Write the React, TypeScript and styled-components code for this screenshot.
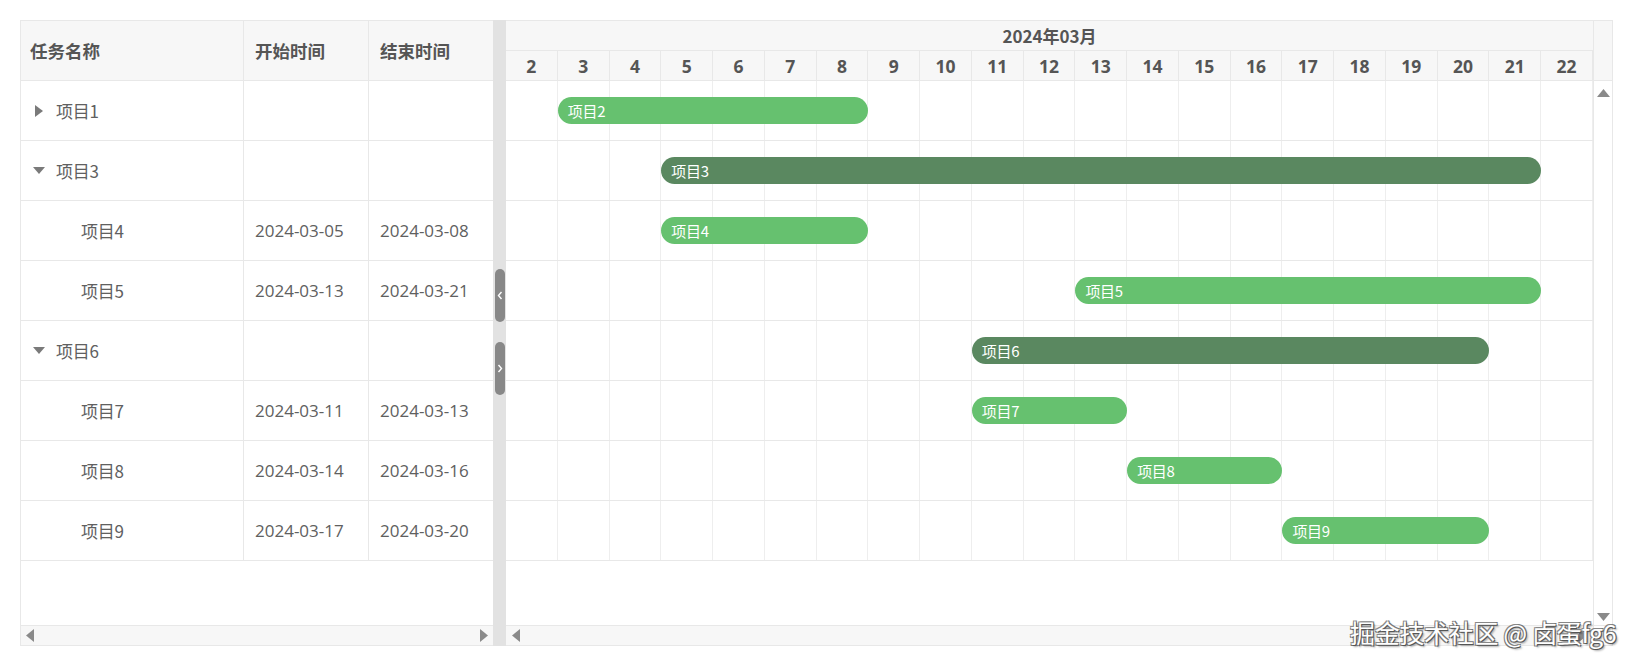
import React from "react";
import styled, { createGlobalStyle } from "styled-components";

const GlobalStyle = createGlobalStyle`
  html, body { margin: 0; padding: 0; background: #ffffff; }
  body {
    font-family: "Open Sans", "Noto Sans CJK SC", sans-serif;
    color: #606266;
  }
  * { box-sizing: border-box; }
`;

const LINE = "#e8e8e8";
const GRID_LINE = "#eeeeee";

type Toggle = "none" | "collapsed" | "expanded";

interface Task {
  name: string;
  depth: number;
  toggle: Toggle;
  start: string;
  end: string;
  bar: { label: string; from: number; to: number; parent: boolean };
}

const TASKS: Task[] = [
  { name: "项目1", depth: 0, toggle: "collapsed", start: "", end: "", bar: { label: "项目2", from: 3, to: 8, parent: false } },
  { name: "项目3", depth: 0, toggle: "expanded", start: "", end: "", bar: { label: "项目3", from: 5, to: 21, parent: true } },
  { name: "项目4", depth: 1, toggle: "none", start: "2024-03-05", end: "2024-03-08", bar: { label: "项目4", from: 5, to: 8, parent: false } },
  { name: "项目5", depth: 1, toggle: "none", start: "2024-03-13", end: "2024-03-21", bar: { label: "项目5", from: 13, to: 21, parent: false } },
  { name: "项目6", depth: 0, toggle: "expanded", start: "", end: "", bar: { label: "项目6", from: 11, to: 20, parent: true } },
  { name: "项目7", depth: 1, toggle: "none", start: "2024-03-11", end: "2024-03-13", bar: { label: "项目7", from: 11, to: 13, parent: false } },
  { name: "项目8", depth: 1, toggle: "none", start: "2024-03-14", end: "2024-03-16", bar: { label: "项目8", from: 14, to: 16, parent: false } },
  { name: "项目9", depth: 1, toggle: "none", start: "2024-03-17", end: "2024-03-20", bar: { label: "项目9", from: 17, to: 20, parent: false } },
];

const FIRST_DAY = 2;
const DAYS = Array.from({ length: 21 }, (_, i) => FIRST_DAY + i);

/* ---------- page frame ---------- */

const Page = styled.div`
  position: relative;
  padding: 20px 0 0 20px;
  width: 1641px;
  height: 672px;
`;

const Frame = styled.div`
  display: flex;
  width: 1593px;
  height: 626px;
`;

/* ---------- left table ---------- */

const TablePanel = styled.section`
  width: 473px;
  display: flex;
  flex-direction: column;
  border: 1px solid ${LINE};
  border-right: none;
`;

const TableRow = styled.div<{ $head?: boolean }>`
  display: grid;
  grid-template-columns: 223px 125px 124px;
  height: 60px;
  flex: none;
  border-bottom: 1px solid ${LINE};
  background: ${(p) => (p.$head ? "#f7f7f7" : "#ffffff")};
`;

const Cell = styled.div<{ $head?: boolean; $first?: boolean; $last?: boolean }>`
  display: flex;
  align-items: center;
  padding-left: ${(p) => (p.$first ? "9px" : "11px")};
  border-right: ${(p) => (p.$last ? "none" : `1px solid ${LINE}`)};
  font-size: ${(p) => (p.$head ? "17.5px" : "17px")};
  font-weight: ${(p) => (p.$head ? 700 : 400)};
  color: ${(p) => (p.$head ? "#555555" : "#606060")};
  font-family: ${(p) =>
    p.$head ? `"Noto Sans CJK SC", sans-serif` : `"Open Sans", "Noto Sans CJK SC", sans-serif`};
  white-space: nowrap;
  overflow: hidden;
`;

const Indent = styled.span<{ $depth: number }>`
  display: inline-block;
  width: ${(p) => p.$depth * 25}px;
  flex: none;
`;

const ToggleSlot = styled.span`
  display: inline-flex;
  align-items: center;
  justify-content: center;
  width: 12px;
  margin: 0 11px 0 3px;
  flex: none;
  height: 14px;
`;

const NameText = styled.span`
  font-family: "Noto Sans CJK SC", sans-serif;
  font-size: 17px;
  line-height: 1;
  letter-spacing: -0.3px;
`;

const TableFiller = styled.div`
  flex: 1;
`;

const HScroll = styled.div<{ $inset: number }>`
  height: 20px;
  flex: none;
  display: flex;
  align-items: center;
  justify-content: space-between;
  padding: 0 ${(p) => p.$inset}px;
  background: #f7f7f7;
  border-top: 1px solid ${LINE};
`;

/* ---------- splitter ---------- */

const Splitter = styled.div`
  width: 13px;
  flex: none;
  background: #e2e2e2;
  display: flex;
  flex-direction: column;
  align-items: flex-start;
  padding: 249px 0 0 2px;
  gap: 20px;
`;

const SplitHandle = styled.div`
  width: 10px;
  height: 53px;
  border-radius: 5px;
  background: #888888;
  display: flex;
  align-items: center;
  justify-content: center;
`;

/* ---------- gantt ---------- */

const GanttPanel = styled.section`
  width: 1107px;
  display: grid;
  grid-template-columns: 1087px 19px;
  grid-template-rows: 60px 1fr 20px;
  border: 1px solid ${LINE};
  border-left: none;
`;

const GanttHead = styled.div`
  display: flex;
  flex-direction: column;
  background: #f7f7f7;
  border-bottom: 1px solid ${LINE};
`;

const MonthRow = styled.div`
  height: 30px;
  flex: none;
  display: flex;
  align-items: center;
  justify-content: center;
  border-bottom: 1px solid ${LINE};
  font-family: "Noto Sans CJK SC", sans-serif;
  font-size: 17px;
  font-weight: 700;
  color: #555555;
`;

const DayGrid = styled.div<{ $height: number }>`
  display: grid;
  grid-template-columns: repeat(21, 1fr);
  height: ${(p) => p.$height}px;
  flex: none;
`;

const DayRowLine = styled(DayGrid)`
  border-bottom: 1px solid ${LINE};
`;

const DayCell = styled.div<{ $col: number; $head?: boolean }>`
  grid-row: 1;
  grid-column: ${(p) => p.$col};
  border-right: 1px solid ${(p) => (p.$head ? LINE : GRID_LINE)};
  display: flex;
  align-items: center;
  justify-content: center;
  font-family: "Open Sans", sans-serif;
  font-size: 17.5px;
  font-weight: 700;
  color: #555555;
`;

const HeadCorner = styled.div`
  background: #f7f7f7;
  border-left: 1px solid ${LINE};
  border-bottom: 1px solid ${LINE};
`;

const GanttBody = styled.div`
  display: flex;
  flex-direction: column;
`;

const Bar = styled.div<{ $from: number; $to: number; $parent: boolean }>`
  grid-row: 1;
  grid-column: ${(p) => `${p.$from} / ${p.$to}`};
  z-index: 1;
  align-self: center;
  height: 27px;
  margin-top: -1px;
  border-radius: 14px;
  background: ${(p) => (p.$parent ? "#5a8860" : "#66c16f")};
  color: #ffffff;
  display: flex;
  align-items: center;
  padding-left: 10px;
  font-family: "Noto Sans CJK SC", sans-serif;
  font-size: 15px;
  line-height: 1;
  letter-spacing: -0.3px;
  white-space: nowrap;
  overflow: hidden;
`;

const VScroll = styled.div`
  border-left: 1px solid ${LINE};
  display: flex;
  flex-direction: column;
  align-items: center;
  justify-content: space-between;
  padding: 8px 0 4px;
  background: #ffffff;
`;

const Corner = styled.div`
  border-left: 1px solid ${LINE};
  border-top: 1px solid ${LINE};
  background: #ffffff;
`;

/* ---------- watermark ---------- */

const Watermark = styled.div`
  position: absolute;
  left: 1350px;
  top: 619px;
  font-family: "Noto Sans CJK SC", sans-serif;
  font-size: 25px;
  line-height: 1.1;
  color: #ffffff;
  white-space: nowrap;
  letter-spacing: -0.3px;
  text-shadow:
    1px 1px 0 #555555,
    -1px -1px 0 #888888,
    1px -1px 0 #777777,
    -1px 1px 0 #777777,
    2px 2px 2px rgba(0, 0, 0, 0.35);
`;

/* ---------- icons ---------- */

const TriRight = () => (
  <svg width="8" height="12" viewBox="0 0 8 12">
    <polygon points="0,0 8,6 0,12" fill="#7a7a7a" />
  </svg>
);

const TriDown = () => (
  <svg width="12" height="8" viewBox="0 0 12 8">
    <polygon points="0,0 12,0 6,7" fill="#7a7a7a" />
  </svg>
);

const Arrow = ({ dir }: { dir: "left" | "right" | "up" | "down" }) => {
  if (dir === "left")
    return (
      <svg width="8" height="13" viewBox="0 0 8 13">
        <polygon points="8,0 8,13 0,6.5" fill="#8a8a8a" />
      </svg>
    );
  if (dir === "right")
    return (
      <svg width="8" height="13" viewBox="0 0 8 13">
        <polygon points="0,0 0,13 8,6.5" fill="#8a8a8a" />
      </svg>
    );
  if (dir === "up")
    return (
      <svg width="13" height="8" viewBox="0 0 13 8">
        <polygon points="0,8 13,8 6.5,0" fill="#8a8a8a" />
      </svg>
    );
  return (
    <svg width="13" height="8" viewBox="0 0 13 8">
      <polygon points="0,0 13,0 6.5,8" fill="#8a8a8a" />
    </svg>
  );
};

const Chevron = ({ dir }: { dir: "left" | "right" }) => (
  <svg width="6" height="9" viewBox="0 0 6 9">
    <polyline
      points={dir === "left" ? "4.5,1 1.5,4.5 4.5,8" : "1.5,1 4.5,4.5 1.5,8"}
      fill="none"
      stroke="#ffffff"
      strokeWidth="1.4"
    />
  </svg>
);

/* ---------- app ---------- */

export default function App() {
  return (
    <Page>
      <GlobalStyle />
      <Frame>
        <TablePanel>
          <TableRow $head>
            <Cell $head $first>任务名称</Cell>
            <Cell $head>开始时间</Cell>
            <Cell $head $last>结束时间</Cell>
          </TableRow>
          {TASKS.map((t) => (
            <TableRow key={t.name}>
              <Cell $first>
                <Indent $depth={t.depth} />
                <ToggleSlot>
                  {t.toggle === "collapsed" && <TriRight />}
                  {t.toggle === "expanded" && <TriDown />}
                </ToggleSlot>
                <NameText>{t.name}</NameText>
              </Cell>
              <Cell>{t.start}</Cell>
              <Cell $last>{t.end}</Cell>
            </TableRow>
          ))}
          <TableFiller />
          <HScroll $inset={5}>
            <Arrow dir="left" />
            <Arrow dir="right" />
          </HScroll>
        </TablePanel>

        <Splitter>
          <SplitHandle>
            <Chevron dir="left" />
          </SplitHandle>
          <SplitHandle>
            <Chevron dir="right" />
          </SplitHandle>
        </Splitter>

        <GanttPanel>
          <GanttHead>
            <MonthRow>2024年03月</MonthRow>
            <DayGrid $height={29}>
              {DAYS.map((d, i) => (
                <DayCell key={d} $col={i + 1} $head>
                  {d}
                </DayCell>
              ))}
            </DayGrid>
          </GanttHead>
          <HeadCorner />

          <GanttBody>
            {TASKS.map((t) => (
              <DayRowLine key={t.name} $height={60}>
                {DAYS.map((d, i) => (
                  <DayCell key={d} $col={i + 1} />
                ))}
                <Bar
                  $from={t.bar.from - FIRST_DAY + 1}
                  $to={t.bar.to - FIRST_DAY + 2}
                  $parent={t.bar.parent}
                >
                  {t.bar.label}
                </Bar>
              </DayRowLine>
            ))}
          </GanttBody>
          <VScroll>
            <Arrow dir="up" />
            <Arrow dir="down" />
          </VScroll>

          <HScroll $inset={6}>
            <Arrow dir="left" />
            <Arrow dir="right" />
          </HScroll>
          <Corner />
        </GanttPanel>
      </Frame>
      <Watermark>掘金技术社区 @ 卤蛋fg6</Watermark>
    </Page>
  );
}
